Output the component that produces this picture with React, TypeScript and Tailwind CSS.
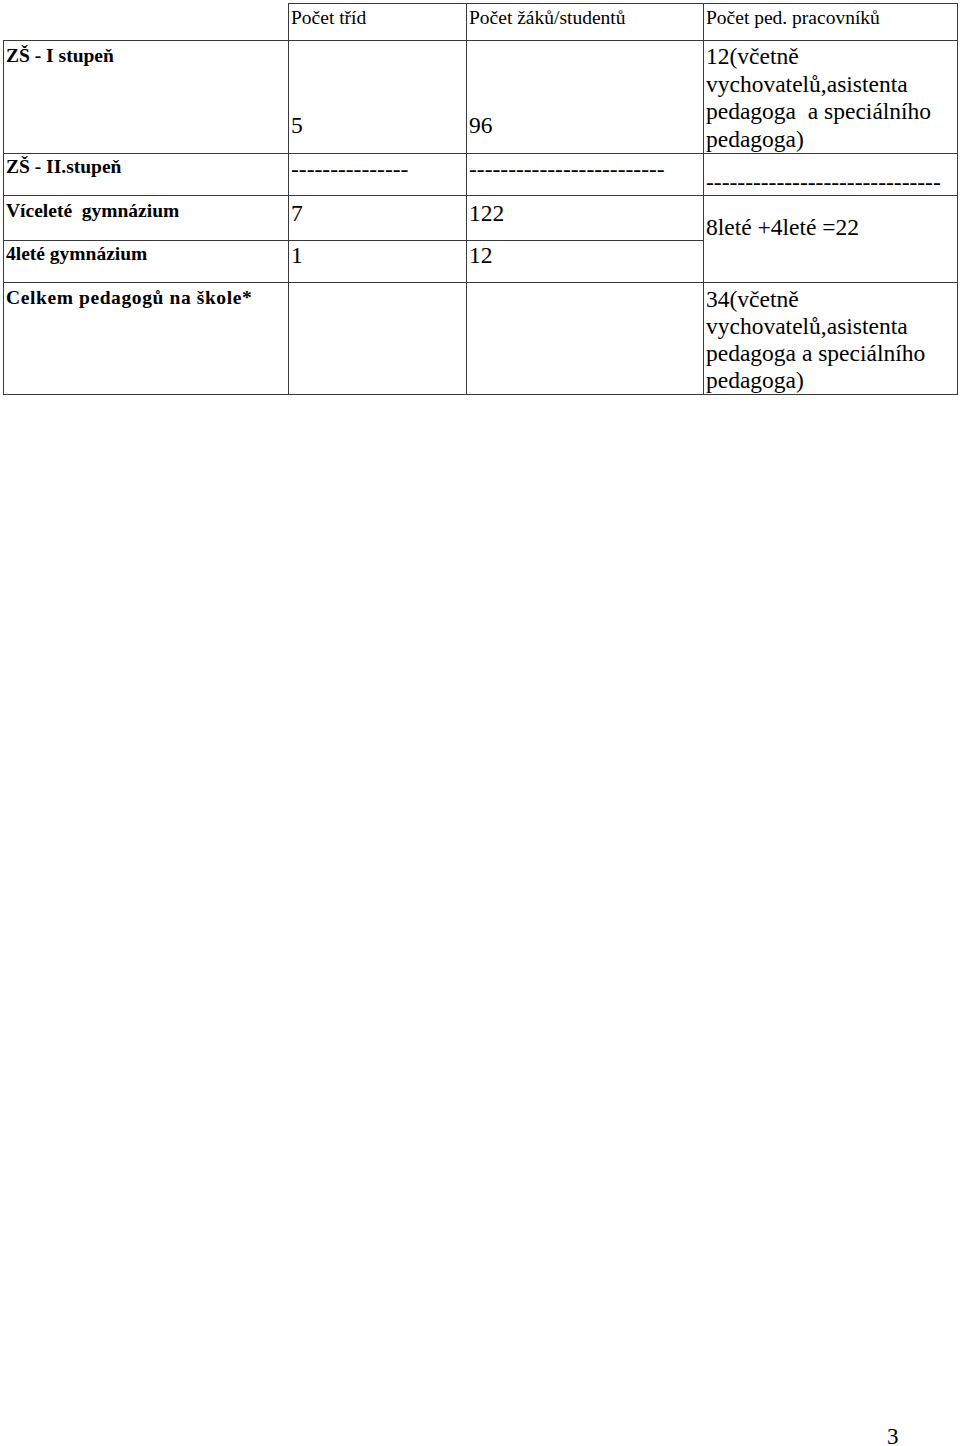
export default function App() {
  const cell = "border border-[#3a3a3a] align-top pl-[2px] pr-0";
  const label = "font-bold text-[19.5px] leading-[22px] text-black";
  const data = "text-[23.5px] leading-[27.5px] text-black";
  const dash = "text-[23.5px] leading-[20px] text-black";
  const head = "text-[19.5px] leading-[22px] text-black";

  return (
    <div className="relative w-[960px] h-[1446px] overflow-hidden bg-white font-['Liberation_Serif',serif]">
      <div className="pt-[3px] pl-[3px]">
        <table className="table-fixed border-collapse">
          <colgroup>
            <col className="w-[285px]" />
            <col className="w-[178px]" />
            <col className="w-[237px]" />
            <col className="w-[254px]" />
          </colgroup>
          <tbody>
            <tr className="h-[37px]">
              <td className="p-0" />
              <td className={`${cell} pt-[3px] ${head}`}>Počet tříd</td>
              <td className={`${cell} pt-[3px] ${head}`}>Počet žáků/studentů</td>
              <td className={`${cell} pt-[3px] ${head}`}>Počet ped. pracovníků</td>
            </tr>
            <tr className="h-[113px]">
              <td className={`${cell} pt-[4px] ${label}`}>ZŠ - I stupeň</td>
              <td className={`${cell} pt-[71px] ${data}`}>5</td>
              <td className={`${cell} pt-[71px] ${data}`}>96</td>
              <td className={`${cell} pt-[2px] ${data}`}>
                12(včetně
                <br />
                vychovatelů,asistenta
                <br />
                pedagoga&nbsp; a speciálního
                <br />
                pedagoga)
              </td>
            </tr>
            <tr className="h-[42px]">
              <td className={`${cell} pt-[2px] ${label}`}>ZŠ - II.stupeň</td>
              <td className={`${cell} pt-[5px] ${dash}`}>---------------</td>
              <td className={`${cell} pt-[5px] ${dash}`}>-------------------------</td>
              <td className={`${cell} pt-[18px] ${dash}`}>------------------------------</td>
            </tr>
            <tr className="h-[45px]">
              <td className={`${cell} pt-[4px] ${label}`}>Víceleté&nbsp; gymnázium</td>
              <td className={`${cell} pt-[4px] ${data}`}>7</td>
              <td className={`${cell} pt-[4px] ${data}`}>122</td>
              <td rowSpan={2} className={`${cell} pt-[18px] ${data}`}>
                8leté +4leté =22
              </td>
            </tr>
            <tr className="h-[42px]">
              <td className={`${cell} pt-[2px] ${label}`}>4leté gymnázium</td>
              <td className={`${cell} pt-[1px] ${data}`}>1</td>
              <td className={`${cell} pt-[1px] ${data}`}>12</td>
            </tr>
            <tr className="h-[111px]">
              <td className={`${cell} pt-[4px] ${label} tracking-[0.6px]`}>Celkem pedagogů na škole*</td>
              <td className={cell} />
              <td className={cell} />
              <td className={`${cell} pt-[3px] text-[23.5px] leading-[27px] text-black`}>
                34(včetně
                <br />
                vychovatelů,asistenta
                <br />
                pedagoga a speciálního
                <br />
                pedagoga)
              </td>
            </tr>
          </tbody>
        </table>
      </div>
      <div className="absolute left-[887px] top-[1424px] text-[23px] leading-[26px] text-black">3</div>
    </div>
  );
}
